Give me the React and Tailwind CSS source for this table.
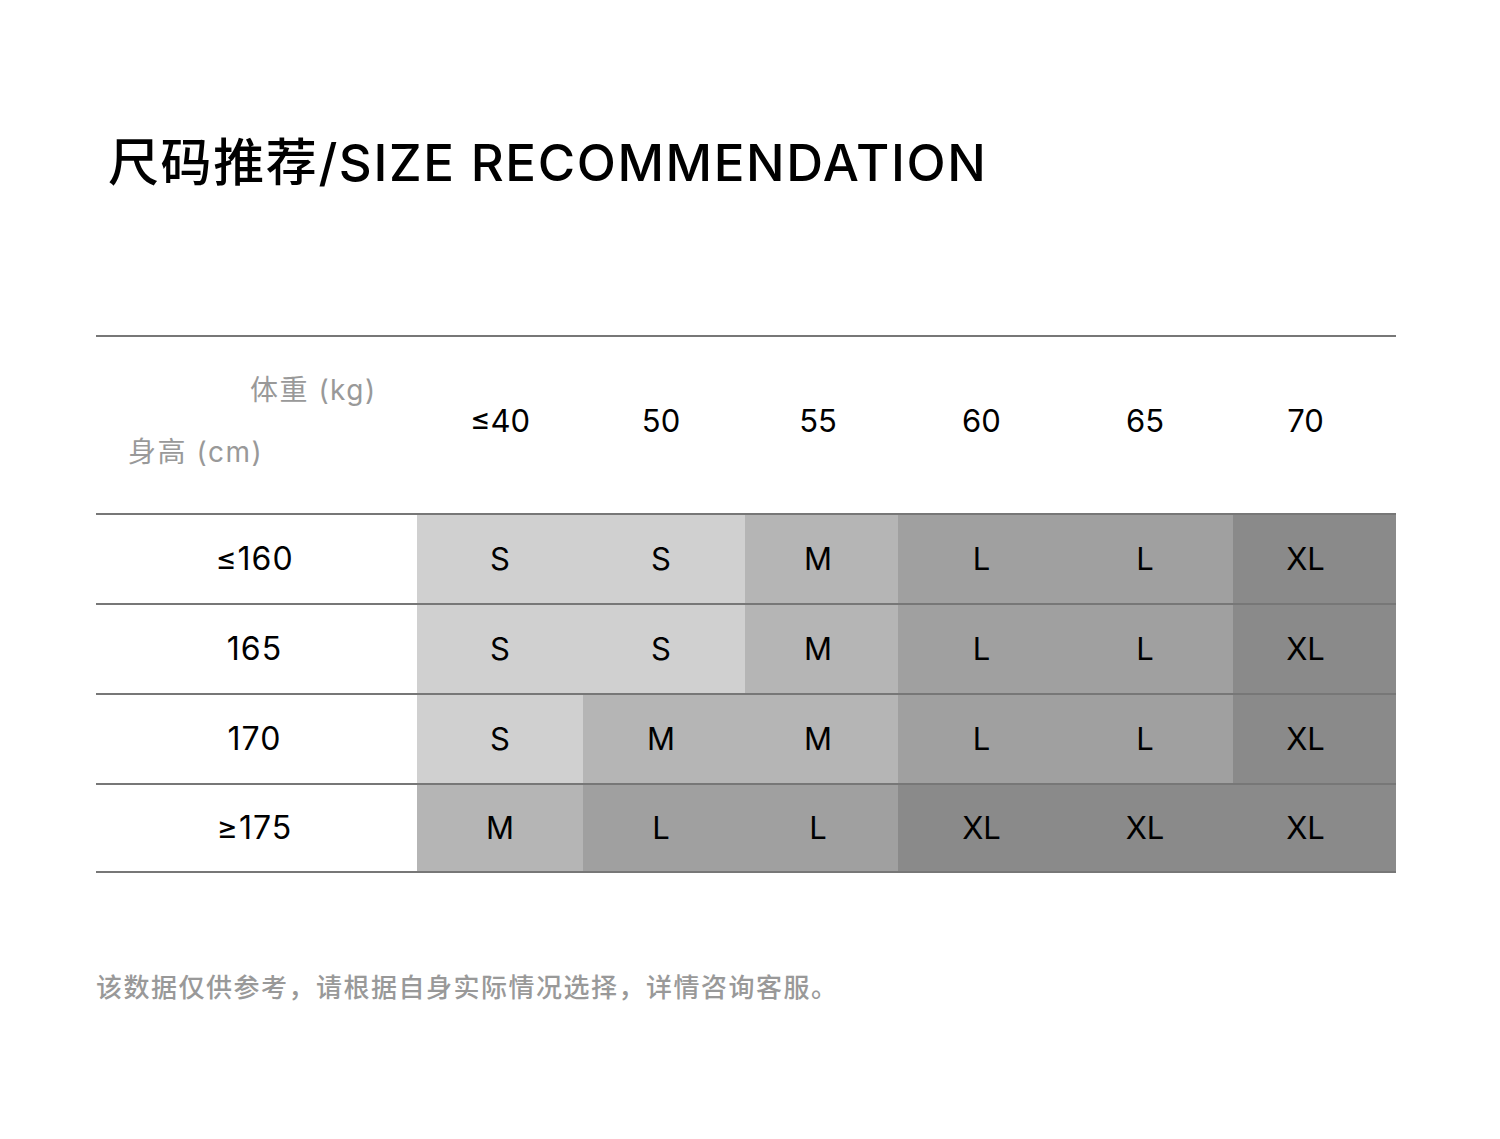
const COLS = [
  { label: '≤40', w: 'w-[166px]', t: 'pr-0' },
  { label: '50', w: 'w-[162px]', t: 'pr-[6px]' },
  { label: '55', w: 'w-[153px]', t: 'pr-[7px]' },
  { label: '60', w: 'w-[167px]', t: 'pr-0' },
  { label: '65', w: 'w-[168px]', t: 'pr-[8px]' },
  { label: '70', w: 'w-[163px]', t: 'pr-[18px]' },
]

const SHADE = {
  S: 'bg-[#d0d0d0]',
  M: 'bg-[#b5b5b5]',
  L: 'bg-[#a0a0a0]',
  XL: 'bg-[#8a8a8a]',
}

const ROWS = [
  { h: '≤160', sizes: ['S', 'S', 'M', 'L', 'L', 'XL'] },
  { h: '165', sizes: ['S', 'S', 'M', 'L', 'L', 'XL'] },
  { h: '170', sizes: ['S', 'M', 'M', 'L', 'L', 'XL'] },
  { h: '≥175', sizes: ['M', 'L', 'L', 'XL', 'XL', 'XL'] },
]

export default function App() {
  return (
    <div className="w-[1500px] h-[1139px] bg-white overflow-hidden font-['Inter','Noto_Sans_CJK_SC',sans-serif]">
      {/* Title */}
      <div className="pl-[108px] pt-[128px] h-[335px]">
        <h1 className="text-[51px] leading-[70px] font-medium text-black tracking-[1.6px]">
          尺码推荐/SIZE RECOMMENDATION
        </h1>
      </div>

      {/* Table */}
      <div className="mx-[96px] w-[1300px]">
        {/* Header */}
        <div className="flex h-[178px] border-t-2 border-[#777]">
          <div className="w-[321px] flex flex-col pt-[33px] text-[28px] text-[#999] leading-[40px] tracking-[1.5px]">
            <div className="pl-[154px]">体重 (kg)</div>
            <div className="pl-[32px] mt-[22px]">身高 (cm)</div>
          </div>
          {COLS.map(c => (
            <div key={c.label} className={`${c.w} ${c.t} flex items-center justify-center pb-[8px] text-[31px] text-black`}>
              {c.label}
            </div>
          ))}
        </div>

        {/* Body */}
        {ROWS.map((r, i) => (
          <div key={r.h} className={`flex h-[90px] border-t-2 border-[#777] ${i === ROWS.length - 1 ? 'border-b-2' : ''}`}>
            <div className="w-[321px] flex items-center justify-center pr-[4px] text-[32px] text-black tracking-[1px]">
              {r.h}
            </div>
            {r.sizes.map((s, j) => (
              <div key={j} className={`${COLS[j].w} ${COLS[j].t} ${SHADE[s]} flex items-center justify-center text-[31px] text-black`}>
                {s}
              </div>
            ))}
          </div>
        ))}
      </div>

      {/* Footer note */}
      <p className="pl-[96px] mt-[93px] text-[26px] font-medium text-[#999] tracking-[1.5px] font-['Noto_Sans_CJK_SC',sans-serif]">
        该数据仅供参考，请根据自身实际情况选择，详情咨询客服。
      </p>
    </div>
  )
}
